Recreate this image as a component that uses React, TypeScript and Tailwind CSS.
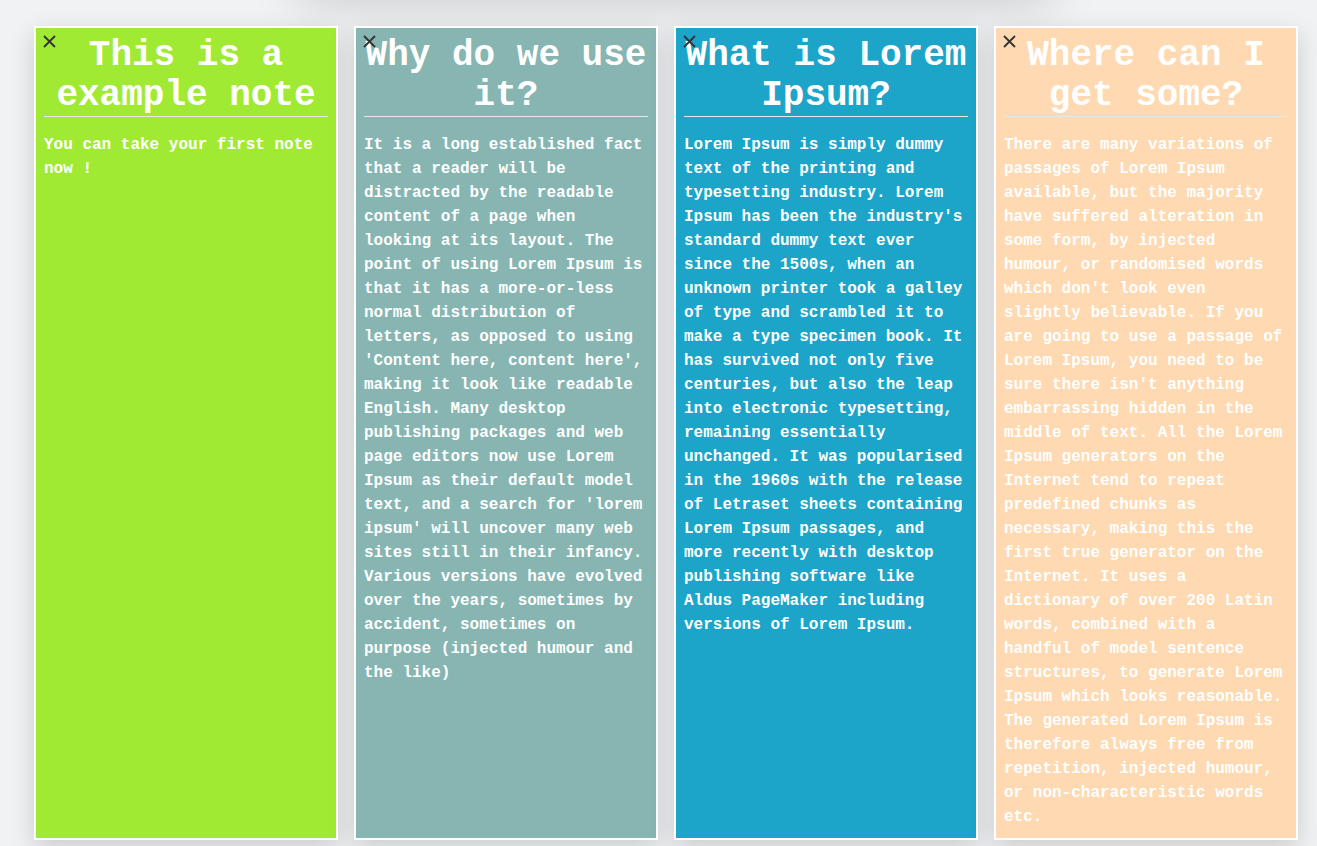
const notes = [
  {
    title: "This is a example note",
    body: "You can take your first note now !",
    color: "bg-[#a1ea34]",
  },
  {
    title: "Why do we use it?",
    body: "It is a long established fact that a reader will be distracted by the readable content of a page when looking at its layout. The point of using Lorem Ipsum is that it has a more-or-less normal distribution of letters, as opposed to using 'Content here, content here', making it look like readable English. Many desktop publishing packages and web page editors now use Lorem Ipsum as their default model text, and a search for 'lorem ipsum' will uncover many web sites still in their infancy. Various versions have evolved over the years, sometimes by accident, sometimes on purpose (injected humour and the like)",
    color: "bg-[#86b5b2]",
  },
  {
    title: "What is Lorem Ipsum?",
    body: "Lorem Ipsum is simply dummy text of the printing and typesetting industry. Lorem Ipsum has been the industry's standard dummy text ever since the 1500s, when an unknown printer took a galley of type and scrambled it to make a type specimen book. It has survived not only five centuries, but also the leap into electronic typesetting, remaining essentially unchanged. It was popularised in the 1960s with the release of Letraset sheets containing Lorem Ipsum passages, and more recently with desktop publishing software like Aldus PageMaker including versions of Lorem Ipsum.",
    color: "bg-[#1ca5c8]",
  },
  {
    title: "Where can I get some?",
    body: "There are many variations of passages of Lorem Ipsum available, but the majority have suffered alteration in some form, by injected humour, or randomised words which don't look even slightly believable. If you are going to use a passage of Lorem Ipsum, you need to be sure there isn't anything embarrassing hidden in the middle of text. All the Lorem Ipsum generators on the Internet tend to repeat predefined chunks as necessary, making this the first true generator on the Internet. It uses a dictionary of over 200 Latin words, combined with a handful of model sentence structures, to generate Lorem Ipsum which looks reasonable. The generated Lorem Ipsum is therefore always free from repetition, injected humour, or non-characteristic words etc.",
    color: "bg-[#fed9b1]",
  },
];

function Note({ title, body, color }: { title: string; body: string; color: string }) {
  return (
    <div
      className={`relative w-[304px] shrink-0 border-2 border-white ${color} px-2 pt-2 pb-[9px] shadow-[0_8px_24px_rgba(0,0,0,0.16)]`}
    >
      <button className="absolute left-[7px] top-[7px] text-[#333]">
        <svg width="13" height="13" viewBox="0 0 13 13" fill="none" stroke="currentColor" strokeWidth="1.8">
          <path d="M1 1l11 11M12 1L1 12" />
        </svg>
      </button>
      <h2 className="text-center text-[36px] leading-[40px] font-bold text-white">{title}</h2>
      <div className="h-px bg-[#e6e6e6]" />
      <p className="mt-4 text-[16px] leading-6 font-bold text-white">{body}</p>
    </div>
  );
}

export default function App() {
  return (
    <div className="relative h-[846px] overflow-hidden bg-[#f1f2f4] font-['Liberation_Mono','DejaVu_Sans_Mono',monospace]">
      <div className="absolute left-[300px] top-[-60px] h-[60px] w-[750px] shadow-[0_0_50px_rgba(0,0,0,0.18)]" />
      <div className="flex items-stretch gap-4 pl-[34px] pt-[26px]">
        {notes.map((n) => (
          <Note key={n.title} {...n} />
        ))}
      </div>
    </div>
  );
}
